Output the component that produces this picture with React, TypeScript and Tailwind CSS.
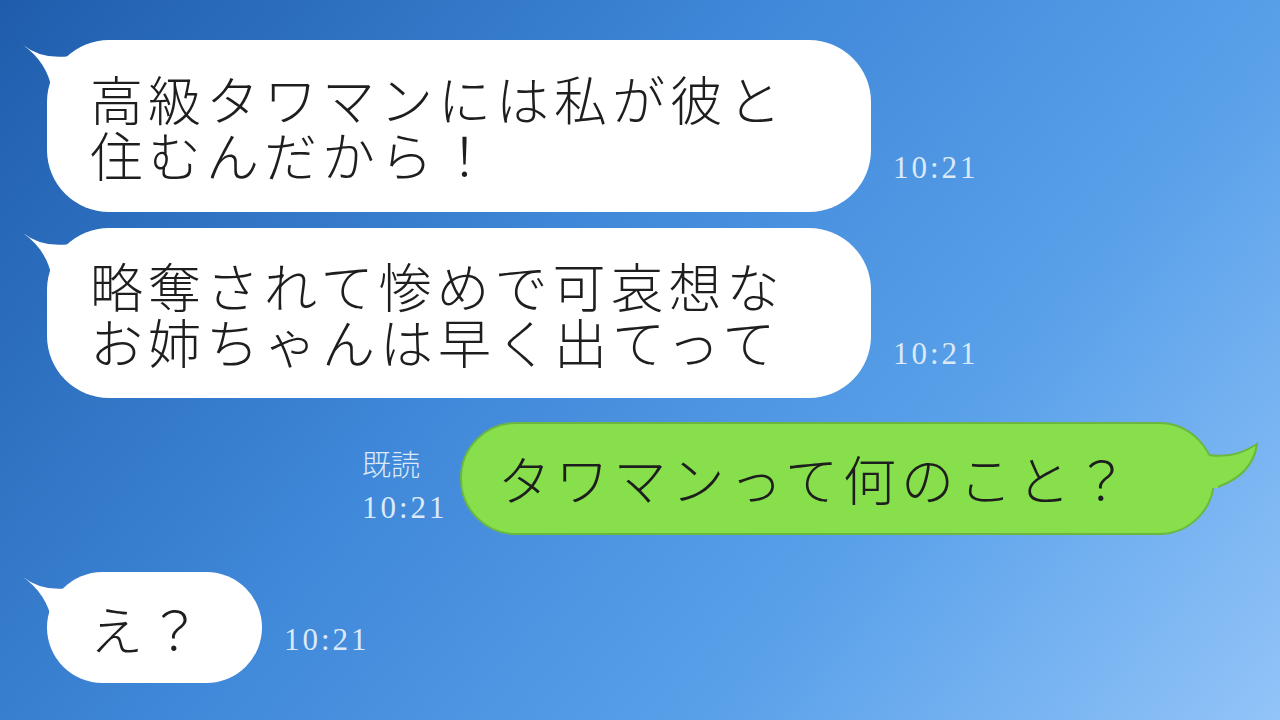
const jp = 'font-["Noto_Sans_CJK_JP","Noto_Sans",sans-serif] font-light';
const time = 'font-["Liberation_Serif",serif] text-[31px] leading-none tracking-[3px] text-[#dce9f8]';

function WhiteTail() {
  return (
    <svg className="absolute -left-[27px] top-0" width="60" height="60" viewBox="0 0 60 60">
      <path d="M3 5 Q22 20 50 16 L60 40 L32 50 Q27 22 3 5 Z" fill="#fff" />
    </svg>
  );
}

function GreenTail() {
  return (
    <svg className="absolute -right-[50px] top-[16px]" width="64" height="52" viewBox="0 0 64 52">
      <path d="M0 14 Q34 20 58 4 Q54 34 18 48 L0 48 Z" fill="#86df4b" />
      <path d="M10 15 Q36 19 58 4 Q54 34 19 47" fill="none" stroke="#6cb83f" strokeWidth="2" />
    </svg>
  );
}

function Incoming({ lines, w, h, ts, tsPad }: { lines: string[]; w: string; h: string; ts: string; tsPad: string }) {
  return (
    <div className="flex items-end">
      <div className={`relative ${w} ${h} rounded-[62px] bg-white pl-[43px] flex flex-col justify-center`}>
        <WhiteTail />
        <p className={`${jp} text-[53px] leading-[56px] tracking-[5px] text-[#1e1e1e] whitespace-nowrap`}>
          {lines.map((l, i) => (
            <span key={l}>
              {i > 0 && <br />}
              {l}
            </span>
          ))}
        </p>
      </div>
      <span className={`${time} ml-[22px] ${tsPad}`}>{ts}</span>
    </div>
  );
}

export default function App() {
  return (
    <div className="w-[1280px] h-[720px] overflow-hidden bg-[linear-gradient(130deg,#1f5dac_0%,#3f87d8_40%,#5aa1ea_70%,#92c4f8_100%)] pt-[40px] pl-[47px] flex flex-col">
      <Incoming lines={['高級タワマンには私が彼と', '住むんだから！']} w="w-[824px]" h="h-[172px]" ts="10:21" tsPad="pb-[29px]" />
      <div className="mt-[16px]">
        <Incoming lines={['略奪されて惨めで可哀想な', 'お姉ちゃんは早く出てって']} w="w-[824px]" h="h-[170px]" ts="10:21" tsPad="pb-[29px]" />
      </div>
      <div className="mt-[24px] flex items-end pl-[315px]">
        <div className="flex flex-col items-start mr-[12px] mb-[12px] text-[#dce9f8]">
          <span className={`${jp} text-[29px] leading-none`}>既読</span>
          <span className={`${time} mt-[14px]`}>10:21</span>
        </div>
        <div className="relative w-[755px] h-[113px] rounded-[56px] bg-[#86df4b] border-2 border-[#6cb83f] pl-[36px] flex items-center">
          <GreenTail />
          <p className={`${jp} text-[53px] leading-none tracking-[5px] text-[#1e1e1e] whitespace-nowrap`}>タワマンって何のこと？</p>
        </div>
      </div>
      <div className="mt-[37px]">
        <Incoming lines={['え？']} w="w-[215px]" h="h-[111px]" ts="10:21" tsPad="pb-[28px]" />
      </div>
    </div>
  );
}
